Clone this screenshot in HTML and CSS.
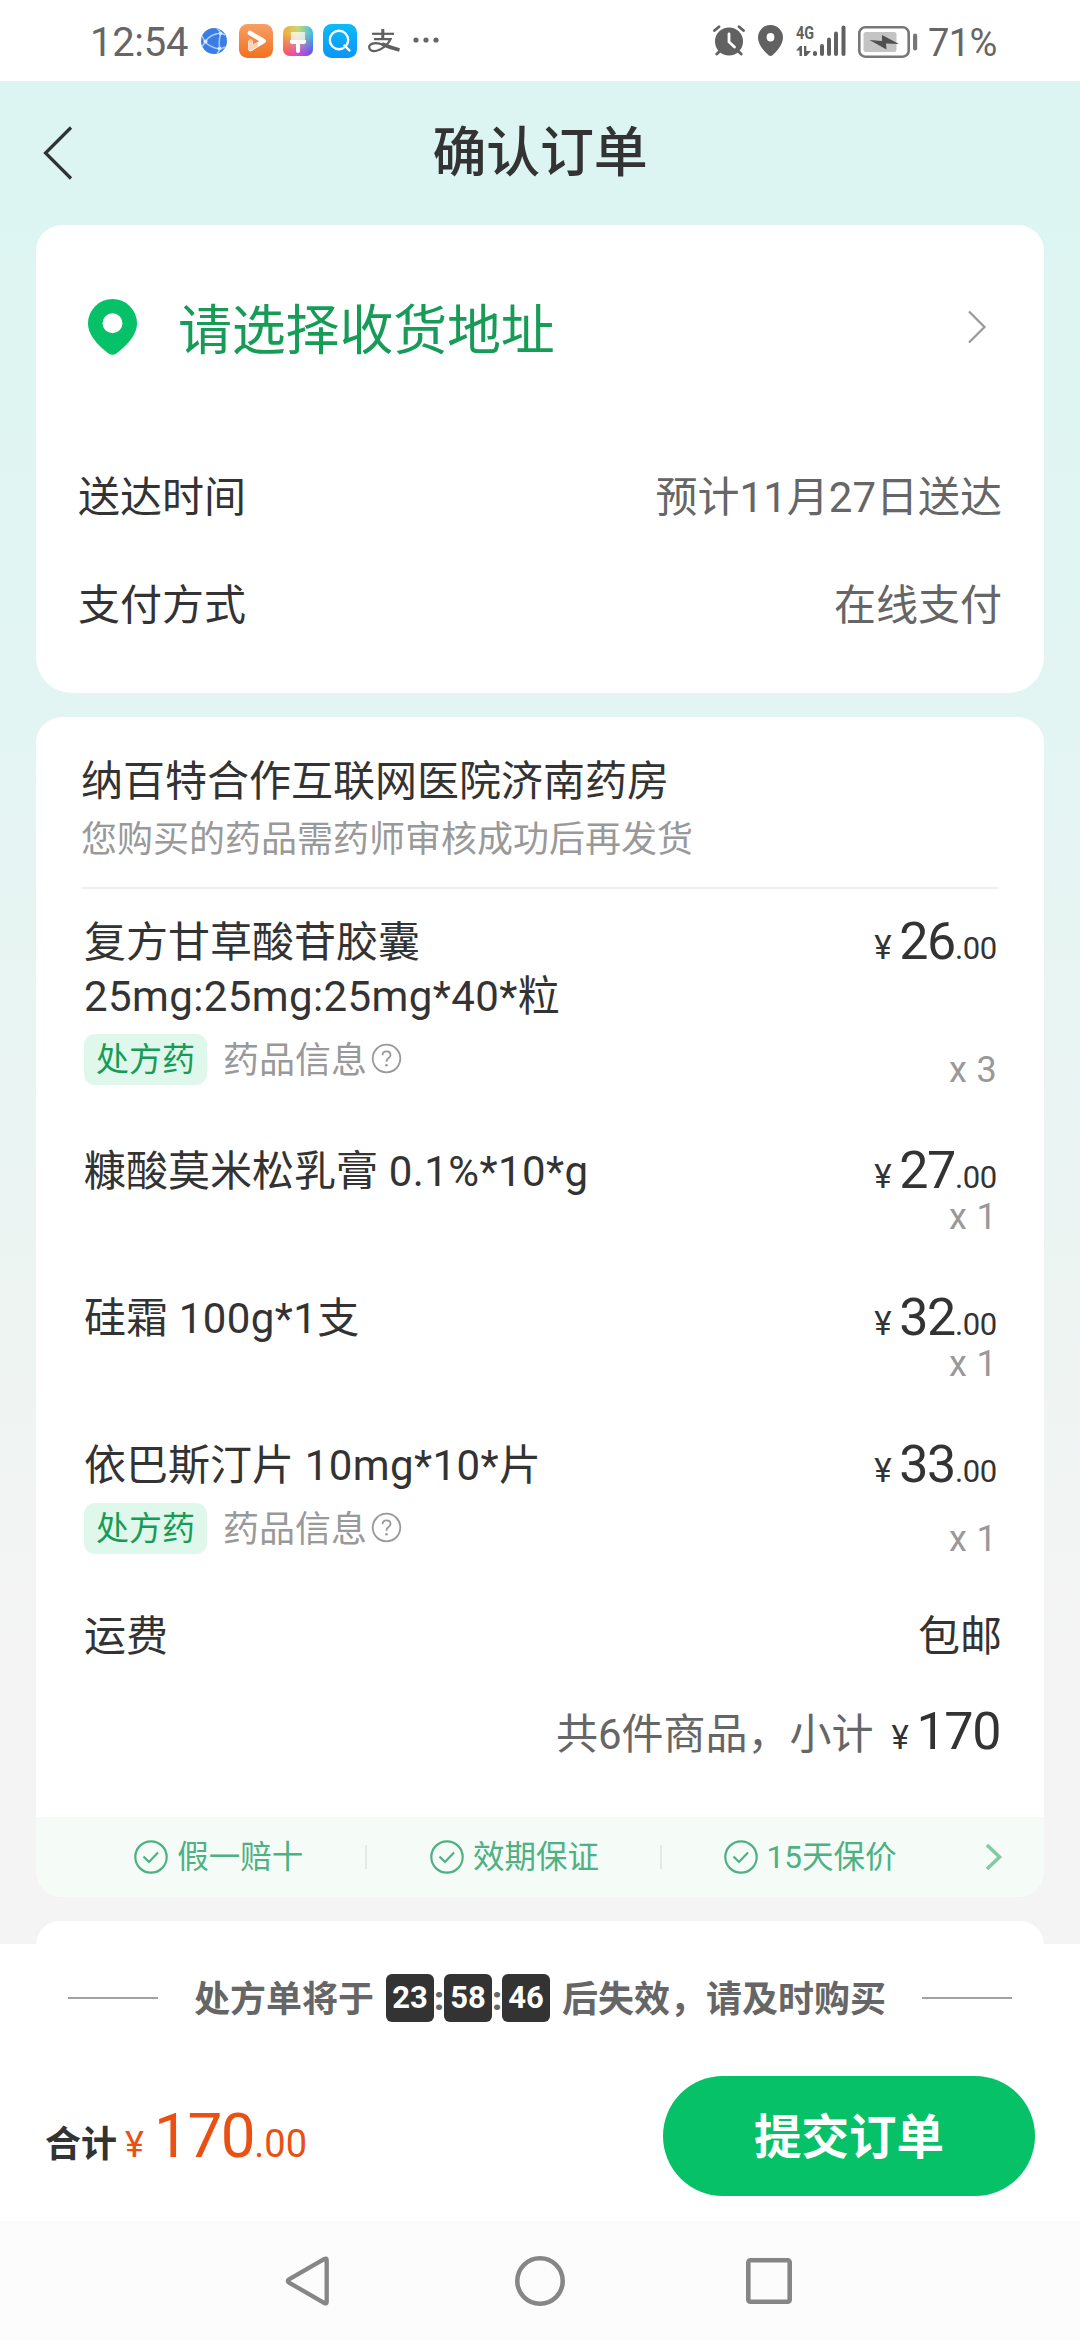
FILE: index.html
```html
<!DOCTYPE html>
<html lang="zh-CN">
<head>
<meta charset="utf-8">
<title>确认订单</title>
<link rel="stylesheet" href="styles.css">
</head>
<body>
<div class="status-bar">
  <span class="clock">12:54</span>
  <svg class="ic-globe" width="26" height="26" viewBox="0 0 26 26"><circle cx="13" cy="13" r="13" fill="#3b7de6"/><g fill="none" stroke="#a9cbfa" stroke-width="1.500"><path d="M4 14 Q9 6 20 5 M4 14 Q10 20 19 21 M20 5 Q17 13 19 21 M4 14 L1 8 M4 14 L1 19 M20 5 L16 0 M20 5 L24 7 M19 21 L16 26 M19 21 L24 19"/></g><circle cx="4.500" cy="13.500" r="2" fill="#dceafe"/><circle cx="19.500" cy="5.500" r="1.800" fill="#dceafe"/><circle cx="18.500" cy="20.500" r="1.800" fill="#dceafe"/></svg>
  <svg class="ic-play" width="34" height="34" viewBox="0 0 34 34"><defs><linearGradient id="og" x1="0" y1="0" x2="0" y2="1"><stop offset="0" stop-color="#f6a066"/><stop offset="1" stop-color="#f3701f"/></linearGradient></defs><rect width="34" height="34" rx="8.500" fill="url(#og)"/><path d="M11 9 L24.500 17 L11.500 25 L11.500 18" fill="none" stroke="#fff" stroke-width="4.600" stroke-linecap="round" stroke-linejoin="round"/><path d="M11.500 17 V24.500 L17 21" fill="none" stroke="#fbd3b8" stroke-width="4" stroke-linecap="round" stroke-linejoin="round"/></svg>
  <svg class="ic-brush" width="30" height="30" viewBox="0 0 30 30"><defs><linearGradient id="t1" x1="0" y1="0" x2="1" y2="0"><stop offset="0" stop-color="#f7a83b"/><stop offset=".5" stop-color="#c8d973"/><stop offset="1" stop-color="#37bdf0"/></linearGradient><linearGradient id="t2" x1="0" y1="0" x2="1" y2="0"><stop offset="0" stop-color="#ff5a4e"/><stop offset=".5" stop-color="#d84bd0"/><stop offset="1" stop-color="#5a55f0"/></linearGradient><linearGradient id="mk" x1="0" y1="0" x2="0" y2="1"><stop offset=".25" stop-color="#fff" stop-opacity="0"/><stop offset=".9" stop-color="#fff"/></linearGradient><mask id="mm"><rect width="30" height="30" fill="url(#mk)"/></mask></defs><rect width="30" height="30" rx="7" fill="url(#t1)"/><rect width="30" height="30" rx="7" fill="url(#t2)" mask="url(#mm)"/><path d="M8 6 H22 V14 H8 Z" fill="#fff" opacity=".7"/><path d="M7 14 H23 V15.500 Q23 18 20.500 18 H17 V25 Q17 27 15 27 Q13 27 13 25 V18 H9.500 Q7 18 7 15.500 Z" fill="#fff"/></svg>
  <svg class="ic-search" width="34" height="34" viewBox="0 0 34 34"><defs><linearGradient id="bg" x1="0" y1="0" x2="0" y2="1"><stop offset="0" stop-color="#0cbcf8"/><stop offset="1" stop-color="#0a94fa"/></linearGradient></defs><rect width="34" height="34" rx="8.500" fill="url(#bg)"/><circle cx="16" cy="16" r="9.200" fill="none" stroke="#fff" stroke-width="2.400"/><path d="M21.500 21.500 L26.500 26.500" stroke="#fff" stroke-width="2.400" stroke-linecap="round"/></svg>
  <svg class="ic-pay" width="32" height="24" viewBox="0 0 32 24"><g fill="none" stroke="#5f5f5f"><path d="M4 4.800 H26" stroke-width="2.200"/><path d="M14.800 0 V10" stroke-width="3"/><path d="M6 10.200 H22.500 Q19 17 12 20.500 Q5 23.800 2 20.500 Q-0.500 16.500 4.500 14.600 Q9 13.200 16 16" stroke-width="2.200"/><path d="M14 15 Q22 18.600 31.500 21" stroke-width="3.600"/></g></svg>
  <svg class="ic-more" width="26" height="6" viewBox="0 0 26 6" fill="#666"><circle cx="3" cy="3" r="2.600"/><circle cx="13" cy="3" r="2.600"/><circle cx="23" cy="3" r="2.600"/></svg>
  <svg class="ic-alarm" width="32" height="31" viewBox="0 0 32 31"><g fill="none" stroke="#616161" stroke-width="2.800" stroke-linecap="round"><path d="M1.500 5.500 L6 1.700 M30.500 5.500 L26 1.700 M7 26 L3.800 29 M25 26 L28.200 29"/></g><circle cx="16" cy="16.500" r="14" fill="#616161"/><path d="M16 9 V17 L21.500 22" fill="none" stroke="#fff" stroke-width="2.800" stroke-linecap="round"/></svg>
  <svg class="ic-loc" width="25" height="31" viewBox="0 0 25 31"><path fill-rule="evenodd" fill="#616161" d="M12.500 0 A12.500 12.500 0 0 1 25 12.500 C25 20 18 27 14.500 30.200 Q12.500 31.800 10.500 30.200 C7 27 0 20 0 12.500 A12.500 12.500 0 0 1 12.500 0 Z M12.500 8 A3.900 4.200 0 1 0 12.500 16.400 A3.900 4.200 0 1 0 12.500 8 Z"/></svg>
  <svg class="ic-signal" width="51" height="32" viewBox="0 0 51 32" fill="#616161"><text x="0" y="14" class="net" textLength="18" lengthAdjust="spacingAndGlyphs">4G</text><path d="M0 25.500 L4 21 H6 V31 H3.500 V25.500 Z M8 21 H10.300 V26 H15 L10.500 31 H8 Z"/><rect x="17" y="26" width="4" height="5" rx="1.800"/><rect x="24" y="19" width="4" height="12" rx="2"/><rect x="31" y="12.500" width="4" height="18.500" rx="2"/><rect x="38" y="6.500" width="4" height="24.500" rx="2"/><rect x="45.500" y="0.500" width="4" height="30.500" rx="2"/></svg>
  <svg class="ic-battery" width="60" height="32" viewBox="0 0 60 32"><rect x="1.300" y="1.300" width="49.400" height="29.400" rx="6" fill="none" stroke="#777" stroke-width="2.600"/><rect x="5.500" y="6" width="33" height="20" rx="2.500" fill="#c4c4c4"/><path d="M11.500 14 L24 15 L24 9 L41 18 L28 17.500 L28.500 23.500 Z" fill="#505050"/><rect x="55" y="7.500" width="4.200" height="17" rx="2.100" fill="#777"/></svg>
  <span class="percent">71%</span>
</div>

<main class="page">
  <header class="title-bar">
    <svg class="back" width="30" height="54" viewBox="0 0 30 54"><path d="M28 1.500 L2.500 27 L28 52.500" fill="none" stroke="#2e3433" stroke-width="3.200"/></svg>
    <h1>确认订单</h1>
  </header>

  <section class="card address-card">
    <div class="address">
      <svg width="49" height="56" viewBox="0 0 49 56"><path fill-rule="evenodd" fill="#06c167" d="M24.500 0 A24.500 24.500 0 0 1 49 24.500 C49 37 37 48 28 54.700 Q24.500 57 21 54.700 C12 48 0 37 0 24.500 A24.500 24.500 0 0 1 24.500 0 Z M24.500 14.200 A10 10 0 1 0 24.500 34.200 A10 10 0 1 0 24.500 14.200 Z"/></svg>
      <span class="address-text">请选择收货地址</span>
      <svg class="go" width="20" height="34" viewBox="0 0 20 34"><path d="M2 1.500 L17.500 17 L2 32.500" fill="none" stroke="#999" stroke-width="2.200"/></svg>
    </div>
    <div class="info-row"><span>送达时间</span><span class="value">预计11月27日送达</span></div>
    <div class="info-row"><span>支付方式</span><span class="value">在线支付</span></div>
  </section>

  <section class="card order-card">
    <div class="store">
      <h2>纳百特合作互联网医院济南药房</h2>
      <p>您购买的药品需药师审核成功后再发货</p>
    </div>
    <div class="items">
      <div class="item">
        <div class="detail">
          <div class="name">复方甘草酸苷胶囊<br><span class="spec">25mg:25mg:25mg*40*</span>粒</div>
          <div class="meta"><span class="tag">处方药</span><span class="about">药品信息</span><svg class="help" width="31" height="31" viewBox="0 0 31 31"><circle cx="15.500" cy="15.500" r="13.800" fill="none" stroke="#999" stroke-width="1.800"/><path d="M11.500 12.200 Q11.500 8.300 15.500 8.300 Q19.500 8.300 19.500 11.800 Q19.500 13.800 17.300 15.200 Q15.500 16.500 15.500 18.800" fill="none" stroke="#999" stroke-width="1.800"/><circle cx="15.500" cy="22.300" r="1.300" fill="#999"/></svg></div>
        </div>
        <div class="cost"><div class="price"><i>¥</i>26<small>.00</small></div><div class="qty">x 3</div></div>
      </div>
      <div class="item">
        <div class="detail"><div class="name">糠酸莫米松乳膏<span class="spec"> 0.1%*10*g</span></div></div>
        <div class="cost"><div class="price"><i>¥</i>27<small>.00</small></div><div class="qty">x 1</div></div>
      </div>
      <div class="item">
        <div class="detail"><div class="name">硅霜<span class="spec"> 100g*1</span>支</div></div>
        <div class="cost"><div class="price"><i>¥</i>32<small>.00</small></div><div class="qty">x 1</div></div>
      </div>
      <div class="item">
        <div class="detail">
          <div class="name">依巴斯汀片<span class="spec"> 10mg*10*</span>片</div>
          <div class="meta"><span class="tag">处方药</span><span class="about">药品信息</span><svg class="help" width="31" height="31" viewBox="0 0 31 31"><circle cx="15.500" cy="15.500" r="13.800" fill="none" stroke="#999" stroke-width="1.800"/><path d="M11.500 12.200 Q11.500 8.300 15.500 8.300 Q19.500 8.300 19.500 11.800 Q19.500 13.800 17.300 15.200 Q15.500 16.500 15.500 18.800" fill="none" stroke="#999" stroke-width="1.800"/><circle cx="15.500" cy="22.300" r="1.300" fill="#999"/></svg></div>
        </div>
        <div class="cost"><div class="price"><i>¥</i>33<small>.00</small></div><div class="qty">x 1</div></div>
      </div>
    </div>
    <div class="freight"><span>运费</span><span>包邮</span></div>
    <div class="subtotal"><span class="count">共6件商品，小计</span><span class="price"><i>¥</i>170</span></div>
    <div class="promises">
      <div class="promise"><svg width="34" height="34" viewBox="0 0 34 34" fill="none" stroke="#4eb183" stroke-width="2.200"><circle cx="17" cy="17" r="15.700"/><path d="M9.500 16.500 L15 22 L24 12.500"/></svg><span>假一赔十</span></div>
      <div class="promise"><svg width="34" height="34" viewBox="0 0 34 34" fill="none" stroke="#4eb183" stroke-width="2.200"><circle cx="17" cy="17" r="15.700"/><path d="M9.500 16.500 L15 22 L24 12.500"/></svg><span>效期保证</span></div>
      <div class="promise"><svg width="34" height="34" viewBox="0 0 34 34" fill="none" stroke="#4eb183" stroke-width="2.200"><circle cx="17" cy="17" r="15.700"/><path d="M9.500 16.500 L15 22 L24 12.500"/></svg><span>15天保价</span></div>
      <svg class="more" width="18" height="28" viewBox="0 0 18 28"><path d="M2 2 L14.500 14 L2 26" fill="none" stroke="#83c9a5" stroke-width="3.600"/></svg>
    </div>
  </section>
  <section class="card next-card"></section>
</main>

<footer class="checkout">
  <div class="countdown">
    <span class="rule"></span>
    <span class="before">处方单将于</span>
    <span class="box">23</span><b>:</b><span class="box">58</span><b>:</b><span class="box">46</span>
    <span class="after">后失效，请及时购买</span>
    <span class="rule"></span>
  </div>
  <div class="pay">
    <div class="total"><strong>合计</strong><i>¥</i><span>170</span><small>.00</small></div>
    <button class="submit">提交订单</button>
  </div>
</footer>

<nav class="system-nav">
  <svg width="50" height="54" viewBox="0 0 50 54"><path d="M40.500 5 Q42.700 3.800 42.700 6.300 V47.700 Q42.700 50.200 40.500 49 L5 28.600 Q2.600 27 5 25.400 Z" fill="none" stroke="#868686" stroke-width="4.300"/></svg>
  <svg width="50" height="50" viewBox="0 0 50 50"><circle cx="25" cy="25" r="22.700" fill="none" stroke="#868686" stroke-width="4.500"/></svg>
  <svg width="46" height="46" viewBox="0 0 46 46"><rect x="2.300" y="2.300" width="41.400" height="41.400" rx="2" fill="none" stroke="#868686" stroke-width="4.600"/></svg>
</nav>
</body>
</html>
```
FILE: styles.css
```css
* { box-sizing: border-box; }
body {
  margin: 0;
  width: 1080px;
  height: 2340px;
  display: flex;
  flex-direction: column;
  font-family: Roboto, "Noto Sans CJK SC", sans-serif;
  color: #333;
  background: #fff;
  white-space: nowrap;
}
h1, h2, p { margin: 0; font-weight: 400; }
i { font-style: normal; }
svg { display: block; flex: none; }

/* status bar */
.status-bar {
  flex: none;
  height: 81px;
  display: flex;
  align-items: flex-start;
  color: #666;
  padding-left: 90px;
}
.clock { width: 111px; font-size: 40px; line-height: 50px; margin-top: 18px; letter-spacing: -.3px; }
.ic-globe { margin-top: 28px; }
.ic-play { margin: 24px 0 0 12px; }
.ic-brush { margin: 26px 0 0 10px; }
.ic-search { margin: 24px 0 0 10px; }
.ic-pay { margin: 29px 0 0 11px; }
.ic-more { margin: 37px 0 0 13px; }
.ic-alarm { margin: 25px 0 0 274px; }
.ic-loc { margin: 25px 0 0 13px; }
.ic-signal { margin: 25px 0 0 13px; overflow: visible; }
.ic-battery { margin: 26px 0 0 11px; }
.net { font-size: 19px; font-weight: 700; }
.percent { margin: 18px 0 0 10px; font-size: 38px; line-height: 50px; letter-spacing: -.6px; }

/* page */
.page {
  flex: none;
  height: 1863px;
  padding: 0 36px;
  background: linear-gradient(#dcf5f2 0, #e3f5f2 640px, #ebf4f2 1100px, #f4f4f4 1560px);
}
.title-bar {
  height: 144px;
  display: grid;
  grid-template-columns: 200px 1fr 200px;
}
.back { margin: 45px 0 0 7px; }
.title-bar h1 {
  text-align: center;
  font-size: 54px;
  font-weight: 500;
  line-height: 70px;
  margin-top: 38px;
  letter-spacing: -.3px;
}
.card { background: #fff; border-radius: 26px; }

.address-card {
  height: 468px;
  padding: 74px 42px 0 42px;
  border-radius: 26px 26px 36px 36px;
}
.address { height: 56px; display: flex; align-items: center; padding-left: 10px; }
.address-text { margin-left: 41px; font-size: 54px; line-height: 60px; color: #169c57; position: relative; top: 5px; letter-spacing: -.2px; }
.go { margin: 0 15px 0 auto; }
.info-row { display: flex; justify-content: space-between; font-size: 42px; line-height: 54px; margin-top: 54px; }
.address + .info-row { margin-top: 116px; }
.value { color: #666; }

.order-card {
  height: 1180px;
  margin-top: 24px;
  padding-top: 38px;
  display: flex;
  flex-direction: column;
}
.store { margin: 0 45px; padding-bottom: 24px; border-bottom: 2px solid #f0f0f0; }
.store h2 { font-size: 42px; line-height: 54px; }
.store p { margin-top: 8px; font-size: 36px; line-height: 46px; color: #999; }

.items { margin: 27px 47px 0 48px; display: flex; flex-direction: column; gap: 55px; }
.item { display: flex; justify-content: space-between; }
.detail { padding-bottom: 5px; }
.name { font-size: 42px; line-height: 54px; }
.spec { letter-spacing: .4px; }
.meta { margin-top: 10px; height: 51px; display: flex; align-items: center; color: #999; }
.tag {
  width: 123px;
  height: 51px;
  border-radius: 11px;
  background: #e0f7eb;
  color: #169c57;
  font-size: 33px;
  line-height: 51px;
  text-align: center;
}
.about { margin-left: 16px; font-size: 36px; line-height: 52px; position: relative; top: 1px; }
.help { margin-left: 4px; position: relative; top: -1px; }
.cost { display: flex; flex-direction: column; justify-content: space-between; align-items: flex-end; }
.price { height: 52px; font-size: 52px; line-height: 52px; letter-spacing: -1.4px; }
.price i { font-size: 33px; line-height: 1px; margin-right: 9px; }
.price small { font-size: 31px; line-height: 1px; letter-spacing: -.3px; }
.qty { font-size: 36px; line-height: 40px; color: #999; letter-spacing: .3px; }

.freight { margin: 51px 42px 0 48px; display: flex; justify-content: space-between; font-size: 42px; line-height: 54px; }
.subtotal { margin: 38px 44px 0 0; height: 60px; display: flex; justify-content: flex-end; align-items: baseline; line-height: 60px; }
.subtotal .count { font-size: 42px; color: #666; }
.subtotal .price { height: 60px; line-height: 60px; margin-left: 18px; }

.promises {
  margin-top: auto;
  height: 80px;
  padding-left: 35px;
  display: flex;
  align-items: center;
  border-radius: 0 0 26px 26px;
  background: #f5fcf8;
  color: #4eb183;
}
.promise { width: 295.6px; display: flex; justify-content: center; align-items: center; gap: 9px; font-size: 31.5px; line-height: 40px; background: linear-gradient(#e2ece6, #e2ece6) right center / 2px 24px no-repeat; }
.promise:nth-child(3) { background: none; }
.promise span { position: relative; top: 1px; }
.more { margin-left: 27px; }
.next-card { height: 24px; margin-top: 24px; border-radius: 26px 26px 0 0; }

/* checkout */
.checkout { flex: none; height: 277px; background: #fff; }
.countdown {
  height: 108px;
  display: flex;
  align-items: center;
  justify-content: center;
  font-size: 36px;
  line-height: 48px;
  font-weight: 700;
  color: #666;
}
.rule { width: 90px; height: 2px; background: #a2a2a2; }
.before { margin: 4px 12px 0 36px; }
.after { margin: 4px 36px 0 12px; }
.countdown b { width: 10px; font-size: 34px; display: flex; justify-content: center; }
.box {
  width: 48px;
  height: 48px;
  border-radius: 6px;
  background: #333;
  color: #fff;
  font-size: 31px;
  line-height: 47px;
  text-align: center;
}
.pay { display: flex; justify-content: space-between; align-items: flex-start; padding: 24px 45px 0 45px; }
.total { display: flex; align-items: baseline; color: #ea4f14; line-height: 74px; margin-top: 23px; }
.total strong { font-size: 36px; color: #333; }
.total i { font-size: 36px; margin-left: 8px; }
.total span { font-size: 62px; margin-left: 10px; letter-spacing: -1.4px; }
.total small { font-size: 38px; }
.submit {
  width: 372px;
  height: 120px;
  border: 0;
  border-radius: 60px;
  background: #06c167;
  color: #fff;
  font: 700 47.5px/116px Roboto, "Noto Sans CJK SC", sans-serif;
  padding: 4px 0 0;
}

/* system navigation */
.system-nav {
  flex: none;
  height: 119px;
  background: #fcfcfc;
  display: flex;
  align-items: center;
  justify-content: center;
  gap: 181px;
  padding-right: 4px;
}
```
